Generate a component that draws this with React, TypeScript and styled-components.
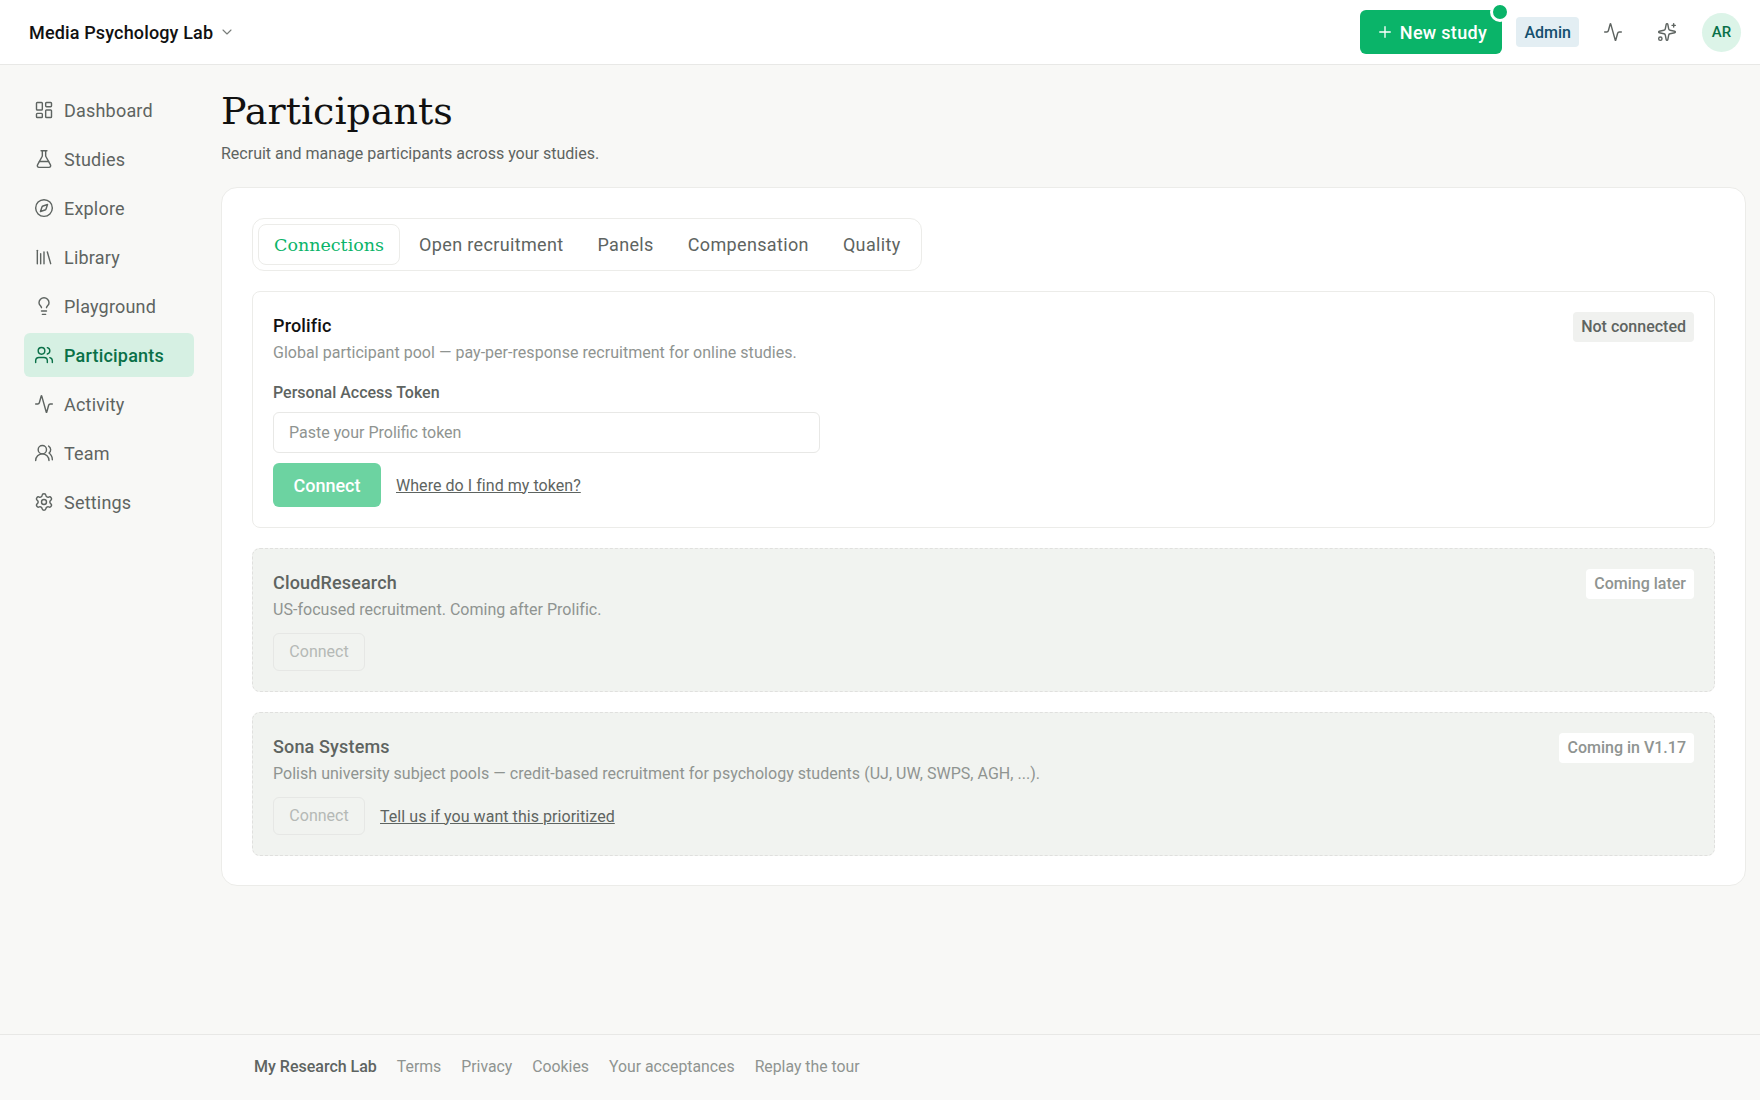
import styled, { createGlobalStyle } from "styled-components";
import {
  Activity,
  ChevronDown,
  Compass,
  FlaskConical,
  LayoutDashboard,
  Library,
  Lightbulb,
  Plus,
  Settings,
  Sparkles,
  Users,
  UsersRound,
} from "lucide-react";

const SANS = `Roboto, "Liberation Sans", sans-serif`;
const SERIF = `"DejaVu Serif", "Liberation Serif", serif`;

const navItems = [
  { label: "Dashboard", icon: LayoutDashboard },
  { label: "Studies", icon: FlaskConical },
  { label: "Explore", icon: Compass },
  { label: "Library", icon: Library },
  { label: "Playground", icon: Lightbulb },
  { label: "Participants", icon: Users, active: true },
  { label: "Activity", icon: Activity },
  { label: "Team", icon: UsersRound },
  { label: "Settings", icon: Settings },
];

const tabs = ["Connections", "Open recruitment", "Panels", "Compensation", "Quality"];
const footerLinks = ["Terms", "Privacy", "Cookies", "Your acceptances", "Replay the tour"];

const App = () => {
  return (
    <>
      <GlobalStyle />
      <Page>
        <Header>
          <Brand>
            Media Psychology Lab
            <ChevronDown size={16} color="#777c79" strokeWidth={1.6} />
          </Brand>
          <HeaderRight>
            <NewStudy>
              <Plus size={18} strokeWidth={1.8} />
              New study
              <Dot />
            </NewStudy>
            <AdminBadge>Admin</AdminBadge>
            <HeaderIcons>
              <IconButton>
                <Activity size={20} strokeWidth={1.7} />
              </IconButton>
              <IconButton>
                <Sparkles size={20} strokeWidth={1.7} />
              </IconButton>
            </HeaderIcons>
            <Avatar>AR</Avatar>
          </HeaderRight>
        </Header>

        <Body>
          <Sidebar>
            {navItems.map(({ label, icon: Icon, active }) => (
              <NavItem key={label} $active={active}>
                <Icon size={20} strokeWidth={1.7} />
                {label}
              </NavItem>
            ))}
          </Sidebar>

          <Main>
            <Title>Participants</Title>
            <Subtitle>Recruit and manage participants across your studies.</Subtitle>
            <Panel>
              <TabList>
                {tabs.map((tab, i) => (
                  <Tab key={tab} $active={i === 0}>
                    {tab}
                  </Tab>
                ))}
              </TabList>

              <Connection>
                <CardHead>
                  <div>
                    <CardName>Prolific</CardName>
                    <CardDesc>
                      Global participant pool — pay-per-response recruitment for online studies.
                    </CardDesc>
                  </div>
                  <Status>Not connected</Status>
                </CardHead>
                <FieldLabel>Personal Access Token</FieldLabel>
                <TokenInput placeholder="Paste your Prolific token" />
                <ActionRow>
                  <ConnectButton>Connect</ConnectButton>
                  <TextLink href="#">Where do I find my token?</TextLink>
                </ActionRow>
              </Connection>

              <Connection $disabled>
                <CardHead>
                  <div>
                    <CardName $disabled>CloudResearch</CardName>
                    <CardDesc>US-focused recruitment. Coming after Prolific.</CardDesc>
                  </div>
                  <Status $disabled>Coming later</Status>
                </CardHead>
                <ActionRow>
                  <GhostButton disabled>Connect</GhostButton>
                </ActionRow>
              </Connection>

              <Connection $disabled>
                <CardHead>
                  <div>
                    <CardName $disabled>Sona Systems</CardName>
                    <CardDesc>
                      Polish university subject pools — credit-based recruitment for psychology
                      students (UJ, UW, SWPS, AGH, ...).
                    </CardDesc>
                  </div>
                  <Status $disabled>Coming in V1.17</Status>
                </CardHead>
                <ActionRow>
                  <GhostButton disabled>Connect</GhostButton>
                  <TextLink href="#">Tell us if you want this prioritized</TextLink>
                </ActionRow>
              </Connection>
            </Panel>
          </Main>
        </Body>

        <Footer>
          <FooterBrand>My Research Lab</FooterBrand>
          {footerLinks.map((link) => (
            <FooterLink key={link} href="#">
              {link}
            </FooterLink>
          ))}
        </Footer>
      </Page>
    </>
  );
};

export default App;

const GlobalStyle = createGlobalStyle`
  * {
    box-sizing: border-box;
  }

  body {
    margin: 0;
    background: #f8f8f6;
    font-family: ${SANS};
    color: #111;
  }
`;

const Page = styled.div`
  display: flex;
  flex-direction: column;
  min-height: 1100px;
`;

const Header = styled.header`
  display: flex;
  align-items: center;
  justify-content: space-between;
  height: 65px;
  padding: 0 19px 0 29px;
  background: #fff;
  border-bottom: 1px solid #e8e8e6;
`;

const Brand = styled.div`
  display: flex;
  align-items: center;
  gap: 6px;
  font-size: 18px;
  font-weight: 500;
  letter-spacing: 0.15px;
  color: #111;
`;

const HeaderRight = styled.div`
  display: flex;
  align-items: center;
`;

const NewStudy = styled.button`
  position: relative;
  display: flex;
  align-items: center;
  justify-content: center;
  gap: 6px;
  width: 142px;
  height: 44px;
  margin-right: 14px;
  border: 0;
  border-radius: 6px;
  background: #0ab469;
  color: #fff;
  font-family: inherit;
  font-size: 18px;
  font-weight: 500;
  letter-spacing: 0.3px;
`;

const Dot = styled.span`
  position: absolute;
  top: -8px;
  right: -8px;
  width: 20px;
  height: 20px;
  border: 3px solid #fff;
  border-radius: 50%;
  background: #0ab469;
`;

const AdminBadge = styled.span`
  display: flex;
  align-items: center;
  height: 30px;
  padding: 0 8px;
  border-radius: 4px;
  background: #e3eef3;
  color: #15506e;
  font-size: 16px;
  font-weight: 500;
`;

const HeaderIcons = styled.div`
  display: flex;
  gap: 10px;
  margin: 0 13px 0 12px;
`;

const IconButton = styled.div`
  display: flex;
  align-items: center;
  justify-content: center;
  width: 44px;
  height: 44px;
  color: #5e6461;
`;

const Avatar = styled.div`
  display: flex;
  align-items: center;
  justify-content: center;
  width: 39px;
  height: 39px;
  border-radius: 50%;
  background: #dcf4e8;
  color: #0a7048;
  font-size: 15px;
  font-weight: 500;
`;

const Body = styled.div`
  display: flex;
  flex: 1;
`;

const Sidebar = styled.nav`
  display: flex;
  flex-direction: column;
  gap: 5px;
  flex: none;
  width: 209px;
  padding: 23px 15px 0 24px;
`;

const NavItem = styled.a<{ $active?: boolean }>`
  display: flex;
  align-items: center;
  gap: 10px;
  height: 44px;
  padding: 0 10px;
  border-radius: 6px;
  background: ${({ $active }) => ($active ? "#d6f0e3" : "transparent")};
  color: ${({ $active }) => ($active ? "#0a7048" : "#5e6461")};
  font-size: 18px;
  font-weight: ${({ $active }) => ($active ? 500 : 400)};
  letter-spacing: 0.2px;
`;

const Main = styled.main`
  flex: 1;
  min-width: 0;
  padding: 22px 14px 29px 12px;
`;

const Title = styled.h1`
  margin: 0;
  font-family: ${SERIF};
  font-size: 38px;
  line-height: 48px;
  font-weight: 400;
  color: #111;
`;

const Subtitle = styled.p`
  margin: 7px 0 21px;
  font-size: 16px;
  line-height: 24px;
  color: #5e6461;
`;

const Panel = styled.section`
  display: flex;
  flex-direction: column;
  align-items: stretch;
  gap: 20px;
  padding: 30px 30px 29px;
  border: 1px solid #ecece9;
  border-radius: 16px;
  background: #fff;
`;

const TabList = styled.div`
  display: flex;
  align-self: flex-start;
  gap: 4px;
  padding: 5px;
  border: 1px solid #ecece9;
  border-radius: 12px;
`;

const Tab = styled.div<{ $active?: boolean }>`
  display: flex;
  align-items: center;
  height: 41px;
  padding: 0 15px;
  border: ${({ $active }) => ($active ? "1px solid #ecece9" : "0")};
  border-radius: 8px;
  color: ${({ $active }) => ($active ? "#0ab469" : "#5e6461")};
  font-family: ${({ $active }) => ($active ? SERIF : "inherit")};
  font-size: ${({ $active }) => ($active ? "17.5px" : "18px")};
  letter-spacing: ${({ $active }) => ($active ? "0" : "0.35px")};
`;

const Connection = styled.article<{ $disabled?: boolean }>`
  padding: 20px;
  border: 1px ${({ $disabled }) => ($disabled ? "dashed #e0e0de" : "solid #ecece9")};
  border-radius: 8px;
  background: ${({ $disabled }) => ($disabled ? "#f1f3f0" : "#fff")};
`;

const CardHead = styled.div`
  display: flex;
  align-items: flex-start;
  justify-content: space-between;
`;

const CardName = styled.h3<{ $disabled?: boolean }>`
  margin: 0;
  font-size: 18px;
  line-height: 28px;
  font-weight: 500;
  letter-spacing: 0.15px;
  color: ${({ $disabled }) => ($disabled ? "#5e6461" : "#111")};
`;

const CardDesc = styled.p`
  margin: 0;
  font-size: 16px;
  line-height: 26px;
  letter-spacing: 0.03px;
  color: #8f9491;
`;

const Status = styled.span<{ $disabled?: boolean }>`
  display: flex;
  align-items: center;
  height: 30px;
  padding: 0 8px 2px;
  border-radius: 4px;
  background: ${({ $disabled }) => ($disabled ? "#fff" : "#f0f1ef")};
  color: ${({ $disabled }) => ($disabled ? "#8f9491" : "#5e6461")};
  font-size: 16px;
  font-weight: 500;
`;

const FieldLabel = styled.div`
  margin-top: 15px;
  font-size: 16px;
  line-height: 24px;
  font-weight: 500;
  color: #5e6461;
`;

const TokenInput = styled.input`
  display: block;
  width: 547px;
  height: 41px;
  margin-top: 7px;
  padding: 0 15px;
  border: 1px solid #e8e8e6;
  border-radius: 6px;
  background: #fff;
  font-family: inherit;
  font-size: 16px;

  &::placeholder {
    color: #8f9491;
  }
`;

const ActionRow = styled.div`
  display: flex;
  align-items: center;
  gap: 15px;
  margin-top: 10px;
`;

const ConnectButton = styled.button`
  width: 108px;
  height: 44px;
  border: 0;
  border-radius: 6px;
  background: #6cd3a1;
  color: #fff;
  font-family: inherit;
  font-size: 18px;
  font-weight: 500;
`;

const GhostButton = styled.button`
  width: 92px;
  height: 38px;
  padding: 0 0 2px;
  border: 1px solid #e6e7e5;
  border-radius: 6px;
  background: transparent;
  color: #b5b9b6;
  font-family: inherit;
  font-size: 16px;
`;

const TextLink = styled.a`
  color: #5e6461;
  font-size: 16px;
  letter-spacing: 0.05px;
  text-decoration: underline;
`;

const Footer = styled.footer`
  display: flex;
  align-items: center;
  gap: 20px;
  height: 66px;
  padding: 0 0 2px 254px;
  border-top: 1px solid #e8e8e6;
  background: #f9f9f8;
  font-size: 16px;
`;

const FooterBrand = styled.span`
  color: #5e6461;
  font-weight: 500;
`;

const FooterLink = styled.a`
  color: #8f9491;
  font-size: 15.8px;
  text-decoration: none;
`;
